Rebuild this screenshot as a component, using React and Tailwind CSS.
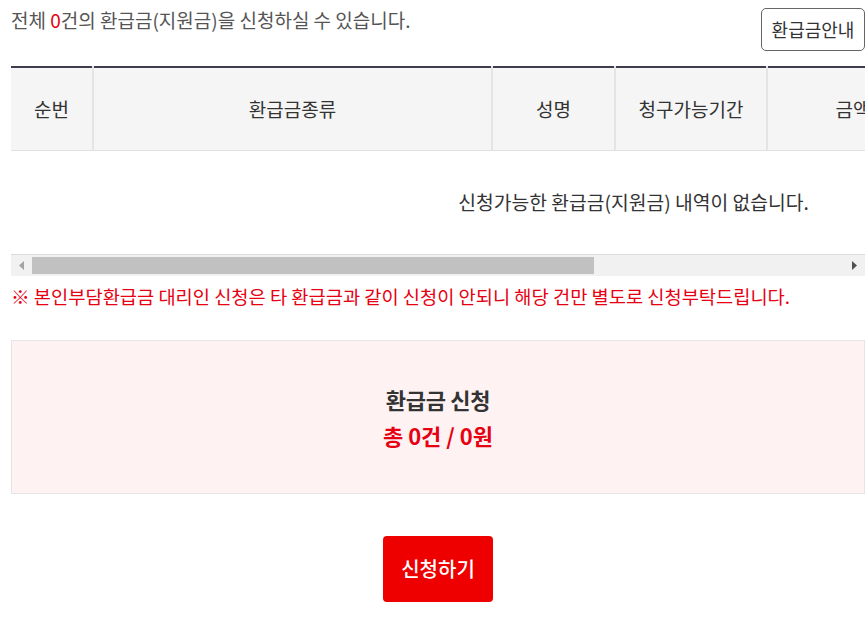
import React from "react";

const columns = [
  { label: "순번", w: "w-[82px]" },
  { label: "환급금종류", w: "w-[399px]" },
  { label: "성명", w: "w-[123px]" },
  { label: "청구가능기간", w: "w-[152px]" },
  { label: "금액", w: "w-[172px]" },
  { label: "지급계좌", w: "w-[162px]" },
  { label: "선택", w: "w-[155px]" },
];

// 가로 스크롤바 (고전 스타일)
const ScrollBar = () => (
  <div className="flex h-[22px] items-center border-t border-[#dcdcdc] bg-[#f1f1f1]">
    <div className="flex w-[21px] justify-center">
      <svg width="6" height="9" viewBox="0 0 6 9">
        <path d="M5 0 L0 4.5 L5 9 Z" fill="#a3a3a3" />
      </svg>
    </div>
    <div className="h-[17px] w-[562px] bg-[#c1c1c1]" />
    <div className="flex-1" />
    <div className="flex w-[21px] justify-center">
      <svg width="6" height="9" viewBox="0 0 6 9">
        <path d="M0 0 L5 4.5 L0 9 Z" fill="#505050" />
      </svg>
    </div>
  </div>
);

const App = () => {
  return (
    <div
      className="min-h-screen bg-white pl-[11px] pr-[2px] pt-2 text-[#333]"
      style={{ fontFamily: '"Noto Sans CJK KR", "Noto Sans", sans-serif' }}
    >
      <div className="flex items-start justify-between">
        <p className="text-[19px] leading-6 text-[#555]">
          전체 <span className="text-[#e60012]">0</span>건의 환급금(지원금)을 신청하실 수 있습니다.
        </p>
        <button className="h-[43px] w-[104px] rounded-[5px] border border-[#666] bg-white text-[18px] text-[#333]">
          환급금안내
        </button>
      </div>

      <div className="mt-[15px] overflow-hidden">
        <table className="w-[1245px] table-fixed border-collapse border-t-2 border-[#3d3d4d]">
          <thead>
            <tr className="h-[83px] bg-[#f5f5f5]">
              {columns.map((c, i) => (
                <th
                  key={c.label}
                  className={`${c.w} whitespace-nowrap border-b border-[#e1e1e1] text-[19px] font-normal text-[#333] ${
                    i < columns.length - 1 ? "border-r-2 border-r-[#e4e4e4]" : ""
                  }`}
                >
                  {c.label}
                </th>
              ))}
            </tr>
          </thead>
          <tbody>
            <tr className="h-[104px]">
              <td colSpan={7} className="text-center text-[19.3px] text-[#333]">
                신청가능한 환급금(지원금) 내역이 없습니다.
              </td>
            </tr>
          </tbody>
        </table>
      </div>
      <ScrollBar />

      <p className="mt-[8px] text-[18.7px] leading-6 text-[#e60012]">
        ※ 본인부담환급금 대리인 신청은 타 환급금과 같이 신청이 안되니 해당 건만 별도로 신청부탁드립니다.
      </p>

      <div className="mt-[32px] flex h-[154px] flex-col items-center justify-center border border-[#e5e5e5] bg-[#fff2f2]">
        <p className="text-[22px] font-bold leading-7 text-[#333] tracking-[-0.3px]">환급금 신청</p>
        <p className="mt-[8px] text-[22px] font-bold leading-7 text-[#e60012]">
          총 0건 / 0원
        </p>
      </div>

      <div className="mt-[42px] flex justify-center">
        <button className="h-[66px] w-[110px] rounded-[4px] bg-[#ee0000] text-[20px] font-medium text-white">
          신청하기
        </button>
      </div>
    </div>
  );
};

export default App;
